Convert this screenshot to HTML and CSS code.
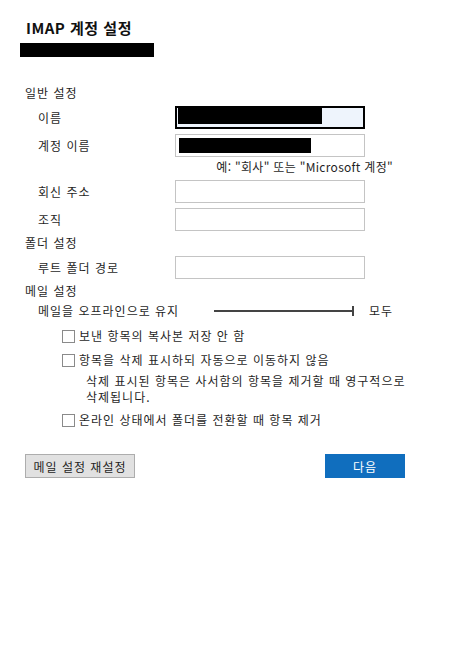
FILE: index.html
```html
<!DOCTYPE html>
<html lang="ko">
<head>
    <meta charset="UTF-8">
    <meta name="viewport" content="width=device-width, initial-scale=1.0">
    <title>IMAP 계정 설정</title>
    <link rel="stylesheet" href="styles.css">
</head>
<body>
    <div class="dialog">
        <h1 class="title">IMAP 계정 설정</h1>
        <div class="redact email"></div>

        <div class="section first">일반 설정</div>
        <div class="row">
            <span class="label">이름</span>
            <div class="field focused"><span class="redact name"></span></div>
        </div>
        <div class="row">
            <span class="label">계정 이름</span>
            <div class="field"><span class="redact account"></span></div>
        </div>
        <div class="hint">예: "회사" 또는 "Microsoft 계정"</div>
        <div class="row after-hint">
            <span class="label">회신 주소</span>
            <div class="field"></div>
        </div>
        <div class="row">
            <span class="label">조직</span>
            <div class="field"></div>
        </div>

        <div class="section">폴더 설정</div>
        <div class="row">
            <span class="label">루트 폴더 경로</span>
            <div class="field"></div>
        </div>

        <div class="section">메일 설정</div>
        <div class="slider-row">
            <span class="slider-label">메일을 오프라인으로 유지</span>
            <div class="slider"></div>
            <span class="slider-value">모두</span>
        </div>

        <div class="check first-check"><span class="box"></span>보낸 항목의 복사본 저장 안 함</div>
        <div class="check"><span class="box"></span>항목을 삭제 표시하되 자동으로 이동하지 않음</div>
        <div class="note">삭제 표시된 항목은 사서함의 항목을 제거할 때 영구적으로 삭제됩니다.</div>
        <div class="check last-check"><span class="box"></span>온라인 상태에서 폴더를 전환할 때 항목 제거</div>

        <div class="actions">
            <button class="btn">메일 설정 재설정</button>
            <button class="btn primary">다음</button>
        </div>
    </div>
</body>
</html>
```

FILE: styles.css
```css
body {
    margin: 0;
    background-color: #fff;
    font-family: "Noto Sans CJK KR", "Noto Sans", sans-serif;
    font-size: 12px;
    letter-spacing: 1px;
    color: #1f1f1f;
}
.dialog {
    padding: 18px 0 0 25px;
    width: 400px;
}
.title {
    margin: 0 0 0 1px;
    font-size: 15px;
    font-weight: bold;
    line-height: 20px;
    letter-spacing: 0.5px;
    color: #111;
}
.redact {
    display: block;
    background-color: #000;
}
.email {
    margin: 5px 0 0 -5px;
    width: 134px;
    height: 14px;
}
.section {
    line-height: 16px;
    margin-top: 4px;
}
.section.first {
    margin-top: 28px;
}
.row {
    display: flex;
    align-items: center;
    margin-top: 5px;
}
.row.after-hint {
    margin-top: 5px;
}
.label {
    flex: 0 0 150px;
    padding-left: 13px;
    box-sizing: border-box;
    line-height: 16px;
}
.field {
    box-sizing: border-box;
    width: 190px;
    height: 23px;
    border: 1px solid #c4c4c4;
    background-color: #fff;
    position: relative;
}
.field.focused {
    border: 2px solid #000;
    background-color: #eef4fc;
}
.name {
    position: absolute;
    left: 1px;
    top: 0;
    width: 144px;
    height: 16px;
}
.account {
    position: absolute;
    left: 3px;
    top: 3px;
    width: 132px;
    height: 15px;
}
.hint {
    width: 368px;
    text-align: right;
    line-height: 16px;
    margin-top: 2px;
    letter-spacing: 0.3px;
}
.slider-row {
    display: flex;
    align-items: center;
    margin-top: 4px;
    line-height: 16px;
}
.slider-label {
    flex: 0 0 189px;
    padding-left: 13px;
    box-sizing: border-box;
}
.slider {
    position: relative;
    width: 140px;
    height: 2px;
    background-color: #444;
}
.slider::after {
    content: "";
    position: absolute;
    right: 0;
    top: -4px;
    width: 2px;
    height: 10px;
    background-color: #444;
}
.slider-value {
    margin-left: 15px;
}
.check {
    display: flex;
    align-items: center;
    margin: 8px 0 0 37px;
    line-height: 16px;
}
.check.first-check {
    margin-top: 9px;
}
.check.last-check {
    margin-top: 7px;
}
.box {
    box-sizing: border-box;
    width: 13px;
    height: 13px;
    border: 1px solid #8a8a8a;
    margin-right: 4px;
    background-color: #fff;
}
.note {
    margin: 5px 0 0 61px;
    width: 325px;
    line-height: 16px;
}
.actions {
    display: flex;
    justify-content: space-between;
    width: 380px;
    margin-top: 26px;
}
.btn {
    box-sizing: border-box;
    height: 24px;
    width: 110px;
    padding: 0;
    font-family: "Noto Sans CJK KR", "Noto Sans", sans-serif;
    font-size: 12px;
    letter-spacing: 1px;
    color: #1f1f1f;
    background-color: #e1e1e1;
    border: 1px solid #adadad;
}
.btn.primary {
    width: 80px;
    color: #fff;
    background-color: #106ebe;
    border-color: #106ebe;
}
```
